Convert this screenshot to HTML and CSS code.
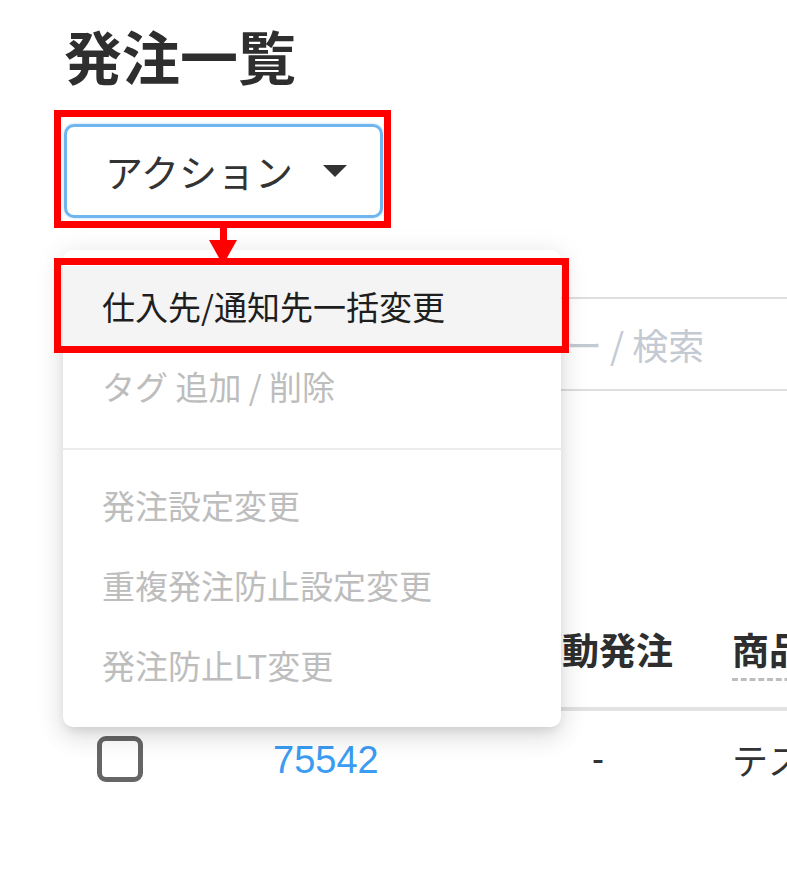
FILE: index.html
```html
<!DOCTYPE html>
<html lang="ja">
<head>
<meta charset="utf-8">
<title>発注一覧</title>
<link rel="stylesheet" href="styles.css">
</head>
<body>
<div class="page">
  <h1 class="title">発注一覧</h1>
  <div class="toolbar">
    <button class="action-btn" type="button">
      <span class="action-label">アクション</span>
      <span class="caret"></span>
    </button>
  </div>
  <div class="search">
    <span class="search-placeholder">ー / 検索</span>
  </div>
  <div class="table">
    <div class="thead">
      <div class="th th-check"></div>
      <div class="th th-id"></div>
      <div class="th th-auto">自動発注</div>
      <div class="th th-name"><span class="dashed">商品名</span></div>
    </div>
    <div class="tr">
      <div class="td td-check"><span class="checkbox"></span></div>
      <div class="td td-id"><a class="link" href="#">75542</a></div>
      <div class="td td-auto">-</div>
      <div class="td td-name">テスト商品</div>
    </div>
  </div>

  <div class="menu">
    <div class="menu-item active">仕入先/通知先一括変更</div>
    <div class="menu-item disabled">タグ 追加 / 削除</div>
    <div class="menu-divider"></div>
    <div class="menu-item disabled">発注設定変更</div>
    <div class="menu-item disabled">重複発注防止設定変更</div>
    <div class="menu-item disabled">発注防止LT変更</div>
  </div>

  <div class="mark mark-btn"></div>
  <div class="mark-arrow">
    <span class="arrow-stem"></span>
    <span class="arrow-head"></span>
  </div>
  <div class="mark mark-item"></div>
</div>
</body>
</html>
```

FILE: styles.css
```css
html, body {
  margin: 0;
  padding: 0;
  background: #ffffff;
  overflow: hidden;
}

body {
  width: 787px;
  height: 874px;
  font-family: "Noto Sans CJK JP", "Noto Sans", sans-serif;
  color: #333333;
}

.page {
  position: relative;
  box-sizing: border-box;
  padding: 27px 0 0 64px;
  width: 1100px;
  height: 874px;
}

.title {
  margin: 0;
  font-size: 58px;
  line-height: 57px;
  font-weight: 700;
  color: #2e2e2e;
}

.toolbar {
  margin-top: 40px;
  display: flex;
}

.action-btn {
  box-sizing: border-box;
  width: 319px;
  height: 94px;
  display: flex;
  align-items: center;
  padding: 0 0 0 38px;
  border: 3px solid #6fb6ee;
  border-radius: 10px;
  background: #ffffff;
  box-shadow: 0 0 3px rgba(100, 170, 235, 0.45);
  font-family: "Noto Sans CJK JP", sans-serif;
  font-size: 38px;
  color: #333333;
  cursor: pointer;
}

.action-label {
  line-height: 1;
}

.caret {
  margin-left: 30px;
  width: 0;
  height: 0;
  border-left: 12px solid transparent;
  border-right: 12px solid transparent;
  border-top: 12px solid #333333;
}

.search {
  box-sizing: border-box;
  margin-top: 79px;
  width: 900px;
  height: 94px;
  border: 2px solid #dedede;
  border-radius: 8px;
  display: flex;
  align-items: center;
  padding-left: 500px;
}

.search-placeholder {
  font-size: 36px;
  color: #c4cad2;
  line-height: 1;
}

.table {
  margin-top: 220px;
  width: 900px;
}

.thead, .tr {
  display: grid;
  grid-template-columns: 176px 280px 178px auto;
}

.thead {
  height: 96px;
  border-bottom: 4px solid #e2e2e2;
}

.th {
  padding-top: 19px;
  font-size: 37px;
  line-height: 38px;
  font-weight: 700;
  color: #2e2e2e;
  white-space: nowrap;
}

.th-auto {
  text-align: center;
  padding-right: 20px;
}

.th-name {
  padding-left: 34px;
}

.dashed {
  display: inline-block;
  padding-bottom: 10px;
  border-bottom: 3px dashed #bdbdbd;
}

.tr {
  height: 96px;
  align-items: center;
}

.td {
  font-size: 36px;
  line-height: 1;
  color: #333333;
  white-space: nowrap;
}

.td-check {
  padding-left: 33px;
  display: flex;
}

.checkbox {
  box-sizing: border-box;
  width: 46px;
  height: 46px;
  border: 5px solid #666666;
  border-radius: 9px;
}

.td-id {
  padding-left: 33px;
}

.link {
  font-family: "Liberation Sans", Arial, sans-serif;
  font-size: 38px;
  color: #3b9cf1;
  text-decoration: none;
}

.td-auto {
  text-align: center;
  padding-right: 22px;
  font-family: "Liberation Sans", Arial, sans-serif;
}

.td-name {
  padding-left: 34px;
}

/* dropdown menu overlay */
.menu {
  position: absolute;
  left: 63px;
  top: 250px;
  width: 498px;
  box-sizing: border-box;
  padding: 16px 0 22px;
  background: #ffffff;
  border-radius: 10px;
  box-shadow: 0 6px 12px -4px rgba(0, 0, 0, 0.12),
              0 10px 24px 2px rgba(0, 0, 0, 0.08),
              0 4px 30px 4px rgba(0, 0, 0, 0.06);
  z-index: 5;
}

.menu-item {
  height: 80px;
  display: flex;
  align-items: center;
  padding-left: 39px;
  font-size: 33px;
  line-height: 1;
}

.menu-item.active {
  background: #f4f4f4;
  color: #1e1e1e;
}

.menu-item.disabled {
  color: #bdbdbd;
}

.menu-divider {
  height: 2px;
  background: #ececec;
  margin: 22px 0 15px;
}

/* red annotations */
.mark {
  position: absolute;
  box-sizing: border-box;
  border: 7px solid #ff0000;
  z-index: 10;
}

.mark-btn {
  left: 54px;
  top: 110px;
  width: 337px;
  height: 118px;
}

.mark-item {
  left: 54px;
  top: 258px;
  width: 515px;
  height: 95px;
}

.mark-arrow {
  position: absolute;
  left: 209px;
  top: 228px;
  width: 28px;
  height: 37px;
  z-index: 11;
  display: flex;
  flex-direction: column;
  align-items: center;
}

.arrow-stem {
  width: 7px;
  height: 12px;
  background: #ff0000;
}

.arrow-head {
  width: 0;
  height: 0;
  border-left: 14px solid transparent;
  border-right: 14px solid transparent;
  border-top: 25px solid #ff0000;
}
```
